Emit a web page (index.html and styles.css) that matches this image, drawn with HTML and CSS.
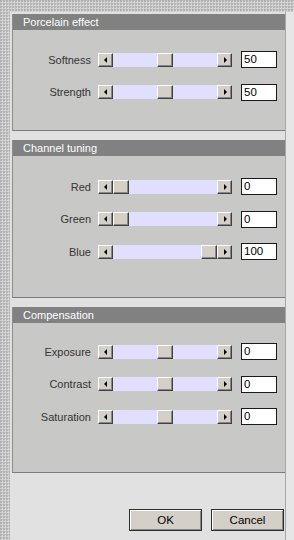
FILE: index.html
```html
<!DOCTYPE html>
<html>
<head>
<meta charset="utf-8">
<link rel="stylesheet" href="styles.css">
</head>
<body>
<div class="frame">
  <div class="dialog">
    <section class="panel p1">
      <div class="panel-title">Porcelain effect</div>
      <div class="rows">
        <div class="row"><span class="label">Softness</span>
          <div class="slider"><span class="arrow left"></span><div class="track"><span class="thumb" style="left:44px"></span></div><span class="arrow right"></span></div>
          <div class="value">50</div></div>
        <div class="row"><span class="label">Strength</span>
          <div class="slider"><span class="arrow left"></span><div class="track"><span class="thumb" style="left:44px"></span></div><span class="arrow right"></span></div>
          <div class="value">50</div></div>
      </div>
    </section>
    <section class="panel p2">
      <div class="panel-title">Channel tuning</div>
      <div class="rows">
        <div class="row"><span class="label">Red</span>
          <div class="slider"><span class="arrow left"></span><div class="track"><span class="thumb" style="left:0px"></span></div><span class="arrow right"></span></div>
          <div class="value">0</div></div>
        <div class="row"><span class="label">Green</span>
          <div class="slider"><span class="arrow left"></span><div class="track"><span class="thumb" style="left:0px"></span></div><span class="arrow right"></span></div>
          <div class="value">0</div></div>
        <div class="row"><span class="label">Blue</span>
          <div class="slider"><span class="arrow left"></span><div class="track"><span class="thumb" style="left:88px"></span></div><span class="arrow right"></span></div>
          <div class="value">100</div></div>
      </div>
    </section>
    <section class="panel p3">
      <div class="panel-title">Compensation</div>
      <div class="rows">
        <div class="row"><span class="label">Exposure</span>
          <div class="slider"><span class="arrow left"></span><div class="track"><span class="thumb" style="left:44px"></span></div><span class="arrow right"></span></div>
          <div class="value">0</div></div>
        <div class="row"><span class="label">Contrast</span>
          <div class="slider"><span class="arrow left"></span><div class="track"><span class="thumb" style="left:44px"></span></div><span class="arrow right"></span></div>
          <div class="value">0</div></div>
        <div class="row"><span class="label">Saturation</span>
          <div class="slider"><span class="arrow left"></span><div class="track"><span class="thumb" style="left:44px"></span></div><span class="arrow right"></span></div>
          <div class="value">0</div></div>
      </div>
    </section>
    <div class="buttons">
      <button class="btn">OK</button>
      <button class="btn">Cancel</button>
    </div>
  </div>
</div>
</body>
</html>
```

FILE: styles.css
```css
html, body {
  margin: 0;
  padding: 0;
}
body {
  width: 294px;
  height: 540px;
  overflow: hidden;
  background-color: #c6c6c6;
  background-image:
    radial-gradient(circle at 1px 1px, #b2b2b2 0.7px, transparent 1px),
    radial-gradient(circle at 2px 2px, #d8d8d8 0.7px, transparent 1px);
  background-size: 3px 3px, 3px 3px;
  font-family: "Liberation Sans", Arial, sans-serif;
  font-size: 11px;
}
.frame {
  margin: 12px 0 0 10px;
  height: 528px;
  background: #e6e6e6;
}
.dialog {
  box-sizing: border-box;
  width: 276px;
  height: 528px;
  background: #e1e1e1;
  border-right: 1px solid #a6a6a6;
  padding: 2px 0 0 2px;
  display: flex;
  flex-direction: column;
}
.panel {
  box-sizing: border-box;
  width: 273px;
  background: #c8c8c6;
  border-left: 1px solid #8c8c8c;
  border-bottom: 1px solid #7c7c7c;
  margin-bottom: 9px;
}
.p1 { height: 117px; }
.p2 { height: 158px; }
.p3 { height: 166px; }
.panel-title {
  height: 16px;
  line-height: 16px;
  background: #818181;
  color: #ffffff;
  padding-left: 10px;
}
.rows {
  display: flex;
  flex-direction: column;
  gap: 15.5px;
  padding-top: 21px;
}
.p2 .rows { padding-top: 22px; }
.p3 .rows { padding-top: 20px; }
.row {
  display: flex;
  align-items: center;
  height: 17px;
}
.label {
  width: 78px;
  text-align: right;
  color: #353535;
  margin-right: 7px;
}
.slider {
  display: flex;
  width: 134px;
  height: 14px;
}
.arrow, .thumb {
  box-sizing: border-box;
  display: block;
  height: 14px;
  background: #d4d0c8;
  border: 1px solid;
  border-color: #ffffff #404040 #404040 #ffffff;
  box-shadow: inset -1px -1px 0 #888888;
}
.arrow {
  width: 15px;
  position: relative;
}
.arrow::after {
  content: "";
  position: absolute;
  top: 3px;
  width: 0;
  height: 0;
  border-top: 3px solid transparent;
  border-bottom: 3px solid transparent;
}
.arrow.left::after {
  left: 5px;
  border-right: 3px solid #000;
}
.arrow.right::after {
  left: 6px;
  border-left: 3px solid #000;
}
.track {
  position: relative;
  width: 104px;
  height: 14px;
  background: #e0e0fe;
}
.thumb {
  position: absolute;
  top: 0;
  width: 16px;
}
.value {
  box-sizing: border-box;
  width: 36px;
  height: 17px;
  margin-left: 9px;
  background: #ffffff;
  border: 1px solid #1a1a1a;
  color: #000;
  font-size: 11.5px;
  line-height: 15px;
  padding-left: 2px;
}
.buttons {
  display: flex;
  justify-content: flex-end;
  gap: 9px;
  padding-right: 1px;
  margin-top: 27px;
}
.btn {
  box-sizing: border-box;
  width: 73px;
  height: 22px;
  padding: 0;
  background: #d4d0c8;
  border: 1px solid #2e2e2e;
  box-shadow: inset 1px 1px 0 #ffffff, inset -1px -1px 0 #888888;
  font-family: "Liberation Sans", Arial, sans-serif;
  font-size: 11.5px;
  color: #000;
}
```
